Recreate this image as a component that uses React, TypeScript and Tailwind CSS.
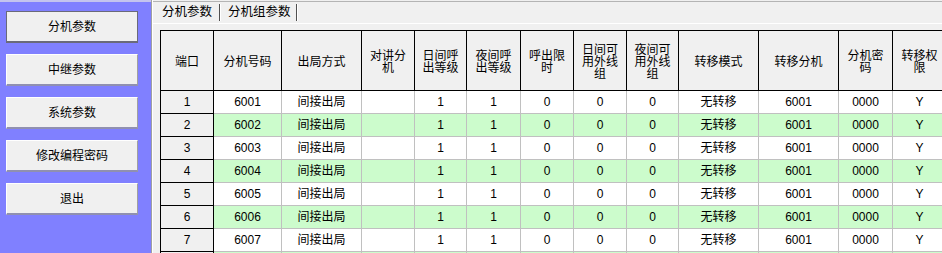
import React from "react";

interface Column {
	lines: string[];
	width: string;
}

const columns: Column[] = [
	{ lines: ["端口"], width: "w-[53px]" },
	{ lines: ["分机号码"], width: "w-[68px]" },
	{ lines: ["出局方式"], width: "w-[80px]" },
	{ lines: ["对讲分", "机"], width: "w-[53px]" },
	{ lines: ["日间呼", "出等级"], width: "w-[52px]" },
	{ lines: ["夜间呼", "出等级"], width: "w-[54px]" },
	{ lines: ["呼出限", "时"], width: "w-[53px]" },
	{ lines: ["日间可", "用外线", "组"], width: "w-[53px]" },
	{ lines: ["夜间可", "用外线", "组"], width: "w-[52px]" },
	{ lines: ["转移模式"], width: "w-[80px]" },
	{ lines: ["转移分机"], width: "w-[80px]" },
	{ lines: ["分机密", "码"], width: "w-[54px]" },
	{ lines: ["转移权", "限"], width: "w-[54px]" },
];

const rows = [1, 2, 3, 4, 5, 6, 7].map((port) => [
	String(port),
	`600${port}`,
	"间接出局",
	"",
	"1",
	"1",
	"0",
	"0",
	"0",
	"无转移",
	"6001",
	"0000",
	"Y",
]);

const menu = ["分机参数", "中继参数", "系统参数", "修改编程密码", "退出"];

const font = "font-['Liberation_Sans','Noto_Sans_CJK_SC',sans-serif]";

export default function App() {
	return (
		<div className={`flex h-[253px] w-[942px] overflow-hidden bg-[#f0f0f0] text-[12px] text-black ${font}`}>
			{/* Left menu */}
			<div className="flex w-[151px] shrink-0 flex-col gap-[11px] border-t-2 border-[#c4c4ee] bg-[#8080ff] px-[6px] pt-[9px]">
				{menu.map((label, i) => (
					<button
						key={label}
						className={
							i === 0
								? "flex h-[32px] w-[132px] items-center justify-center border border-b-2 border-[#6a6a7a] bg-[#f0f0f0] pt-[1px]"
								: "flex h-[32px] w-[132px] items-center justify-center border border-b-2 border-t-white border-l-white border-r-[#a0a0a0] border-b-[#9090b0] bg-[#f0f0f0] pt-[1px]"
						}
					>
						{label}
					</button>
				))}
			</div>

			{/* Right content */}
			<div className="flex min-w-0 flex-1 flex-col border-l border-[#a0a0a0]">
				<div className="flex flex-1 flex-col border-l border-white">
					{/* Tabs */}
					<div className="mt-[1px] flex h-[23px] items-center border-t border-b border-t-[#b4b4b4] border-b-white pl-[9px] text-[12.5px]">
						<span>分机参数</span>
						<span className="mx-[7px] h-[17px] border-l border-r border-l-[#505050] border-r-white" />
						<span>分机组参数</span>
						<span className="ml-[5px] h-[17px] border-l border-r border-l-[#505050] border-r-white" />
					</div>

					{/* Table */}
					<div className="mt-[6px] ml-[7px] flex flex-col border-t border-l border-black">
						<div className="flex bg-[#f0f0f0]">
							{columns.map((col, i) => (
								<div
									key={i}
									className={`${col.width} flex h-[60px] shrink-0 flex-col items-center justify-center border-r border-b border-black font-['Noto_Sans_CJK_SC',sans-serif] leading-[12px]`}
								>
									{col.lines.map((line) => (
										<div key={line} className="h-[12px] overflow-visible">
											{line}
										</div>
									))}
								</div>
							))}
						</div>
						{rows.map((row, r) => (
							<div key={r} className={`flex ${r % 2 === 1 ? "bg-[#ccfccc]" : "bg-white"}`}>
								{row.map((value, c) =>
									c === 0 ? (
										<div
											key={c}
											className={`${columns[c].width} flex h-[23px] shrink-0 items-center justify-center border-r border-b border-black bg-[#f0f0f0]`}
										>
											{value}
										</div>
									) : (
										<div
											key={c}
											className={`${columns[c].width} flex h-[23px] shrink-0 items-center justify-center border-r border-b border-[#c0c0c0]`}
										>
											{value}
										</div>
									)
								)}
							</div>
						))}
						{/* next row, only its top edge is in view */}
						<div className="flex bg-[#ccfccc]">
							{columns.map((col, c) => (
								<div
									key={c}
									className={
										c === 0
											? `${col.width} h-[23px] shrink-0 border-r border-black bg-[#f0f0f0]`
											: `${col.width} h-[23px] shrink-0 border-r border-[#c0c0c0]`
									}
								/>
							))}
						</div>
					</div>
				</div>
			</div>
		</div>
	);
}
